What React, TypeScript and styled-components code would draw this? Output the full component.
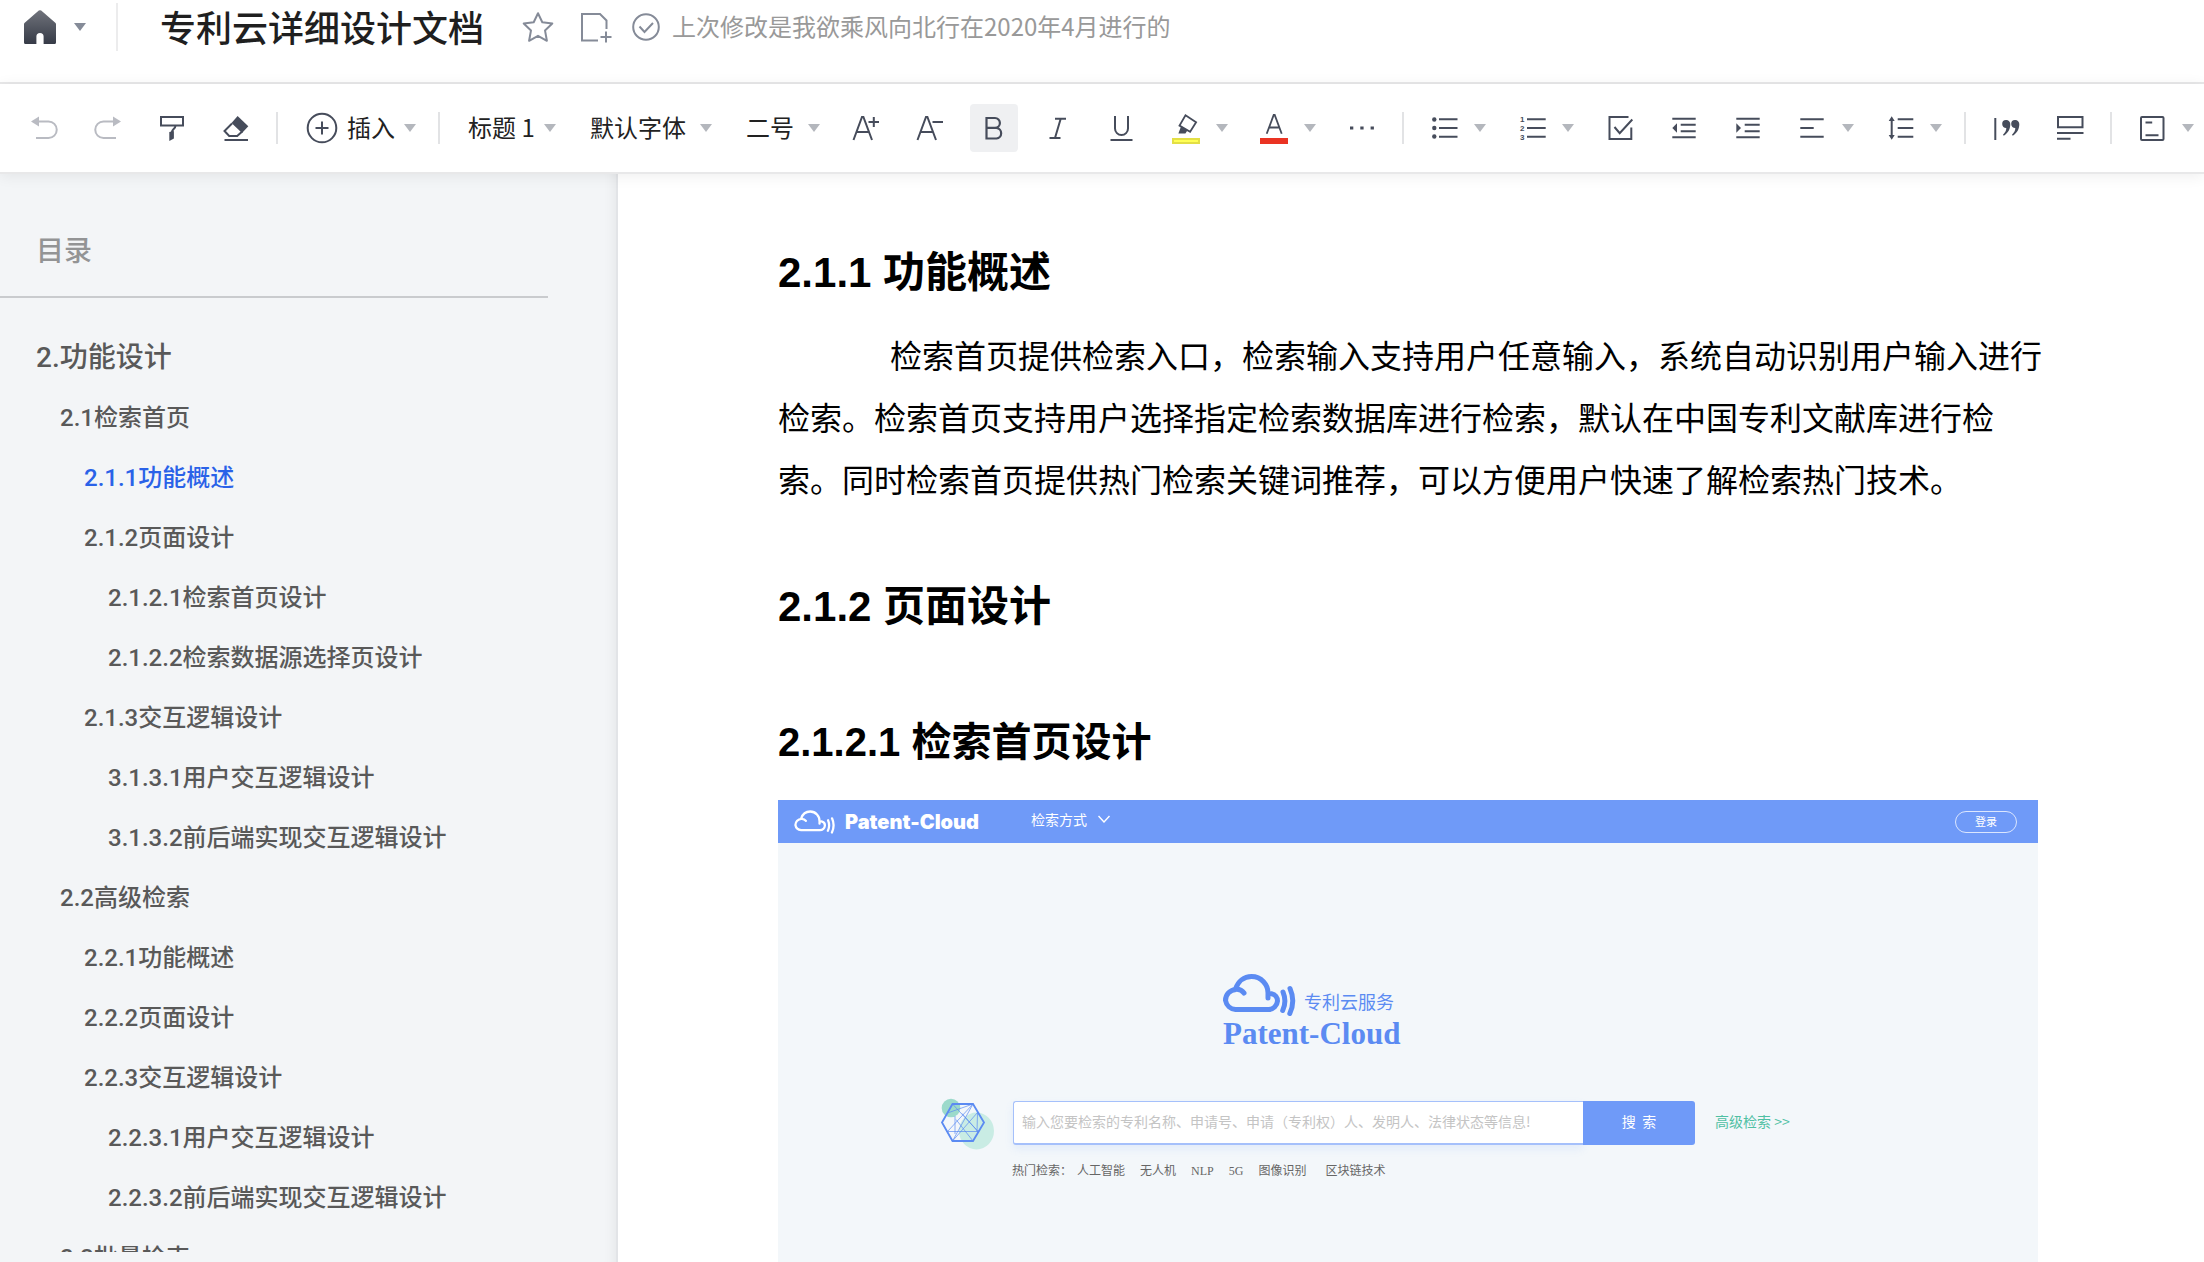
import React from "react";
import styled, { createGlobalStyle, css } from "styled-components";

const sans = '"Liberation Sans", "Noto Sans CJK SC", sans-serif';
const cjk = '"Noto Sans CJK SC", sans-serif';
const ink = "#464c5b";
const brand = "#5b8bf2";

const GlobalStyle = createGlobalStyle`
  *, *::before, *::after { box-sizing: border-box; }
  body { margin: 0; background: #fff; color: #222; font-family: ${sans}; }
  button, select, input { font: inherit; color: inherit; margin: 0; }
  h1, h2, h3, p, ul { margin: 0; padding: 0; }
  ul { list-style: none; }
  a { color: inherit; text-decoration: none; }
  svg { display: block; flex: none; }
`;

/* ---------- shell ---------- */

const Shell = styled.div`
  display: flex;
  flex-direction: column;
  height: 100vh;
  overflow: hidden;
`;

const Header = styled.header`
  display: flex;
  align-items: center;
  padding: 0 24px 28px;
  border-bottom: 2px solid #e8e8e9;
  font-family: ${cjk};
`;

const HeaderGroup = styled.div<{ $gap: number }>`
  display: flex;
  align-items: center;
  gap: ${(p) => p.$gap}px;
`;

const PlainButton = styled.button`
  display: flex;
  align-items: center;
  padding: 0;
  border: 0;
  background: none;
  cursor: pointer;
`;

const HomeButton = styled(PlainButton)`
  gap: 18px;
  margin-right: 30px;
`;

const HeaderRule = styled.span`
  width: 2px;
  height: 48px;
  background: #ececed;
`;

const DocTitle = styled.h1`
  margin: 0 38px 0 42px;
  padding-bottom: 2px;
  font-size: 36px;
  line-height: 52px;
  font-weight: 500;
  color: #1f1f1f;
  white-space: nowrap;
`;

const Label = styled.span`
  padding-bottom: 2px;
`;

const SavedNote = styled.div`
  display: flex;
  align-items: center;
  gap: 12px;
  font-size: 24px;
  line-height: 36px;
  color: #999;
  white-space: nowrap;
`;

/* ---------- toolbar ---------- */

const Toolbar = styled.div`
  position: relative;
  z-index: 2;
  display: flex;
  align-items: center;
  gap: 16px;
  flex: none;
  height: 90px;
  padding: 0 0 0 20px;
  border-bottom: 2px solid #e8e8e9;
  background: #fff;
  box-shadow: 0 2px 14px rgba(0, 0, 0, 0.07);
  font-family: ${cjk};
  font-size: 24px;
  line-height: 36px;
  color: #222;
`;

const ToolButton = styled.button<{ $active?: boolean; $menu?: boolean }>`
  display: flex;
  align-items: center;
  gap: 14px;
  flex: none;
  width: ${(p) => (p.$menu ? 72 : 48)}px;
  height: 48px;
  padding: 0 6px 0 8px;
  border: 0;
  border-radius: 4px;
  background: ${(p) => (p.$active ? "#eff0f2" : "none")};
  cursor: pointer;
`;

const InsertButton = styled(PlainButton)`
  flex: none;
  gap: 9px;
  height: 48px;
  padding: 0 6px 0 12px;
`;

const ToolRule = styled.span`
  flex: none;
  width: 2px;
  height: 32px;
  background: #e2e3e5;
`;

const SelectBox = styled.label<{ $width: number }>`
  display: grid;
  flex: none;
  align-items: center;
  width: ${(p) => p.$width}px;
  height: 48px;

  & > * {
    grid-area: 1 / 1;
  }
  & > svg {
    justify-self: end;
    margin-right: 6px;
    pointer-events: none;
  }
`;

const Select = styled.select`
  appearance: none;
  width: 100%;
  height: 48px;
  padding: 0 12px 2px;
  border: 0;
  background: none;
  cursor: pointer;
`;

/* ---------- outline ---------- */

const Body = styled.div`
  display: flex;
  flex: 1;
  min-height: 0;
`;

const Sidebar = styled.aside`
  flex: none;
  width: 618px;
  padding-bottom: 10px;
  border-right: 2px solid #e2e4e7;
  background: #f3f5f7;
  box-shadow: inset -14px 0 14px -14px rgba(0, 0, 0, 0.08);
`;

const SidebarClip = styled.div`
  height: 100%;
  overflow: hidden;
`;

const SidebarTitle = styled.h2`
  width: 548px;
  padding: 54px 36px 26px;
  border-bottom: 2px solid #c9cbce;
  font-family: ${cjk};
  font-size: 28px;
  line-height: 42px;
  font-weight: 500;
  color: #939495;
`;

const Outline = styled.ul`
  padding-top: 30px;
  font-family: Roboto, "Noto Sans CJK SC", sans-serif;
`;

const OutlineLink = styled.a<{ $level: number; $current?: boolean }>`
  display: block;
  padding-left: ${(p) => 36 + p.$level * 24}px;
  font-size: ${(p) => (p.$level === 0 ? 28 : 24)}px;
  line-height: 60px;
  font-weight: 500;
  color: ${(p) => (p.$current ? "#2a62e8" : "#595959")};
  white-space: nowrap;
`;

/* ---------- document ---------- */

const Page = styled.main`
  flex: 1;
  min-width: 0;
  overflow: hidden;
  padding: 67px 160px 0;
  color: #000;
`;

const heading = css`
  font-weight: 700;
  line-height: 64px;
`;

const Heading = styled.h2`
  ${heading}
  font-size: 42px;
`;

const SubHeading = styled.h3`
  ${heading}
  margin: 71px 0 26px;
  font-size: 40px;
`;

const Paragraph = styled.p`
  margin: 18px 0 66px;
  font-family: ${cjk};
  font-size: 32px;
  line-height: 62px;
  text-indent: 112px;
`;

/* ---------- embedded search page ---------- */

const Preview = styled.section`
  max-width: 1260px;
  height: 600px;
  background: #f3f7fa;
  font-family: ${cjk};
`;

const PreviewBar = styled.div`
  display: flex;
  align-items: center;
  height: 43px;
  padding: 0 21px 0 16px;
  background: #6f9af8;
  color: #fff;
`;

const PreviewBrand = styled.span`
  margin: 0 52px 0 9px;
  font-family: Inter, sans-serif;
  font-size: 20px;
  line-height: 24px;
  font-weight: 900;
`;

const ModeButton = styled(PlainButton)`
  gap: 11px;
  font-size: 14px;
  line-height: 20px;
  padding-bottom: 6px;
`;

const LoginButton = styled(PlainButton)`
  justify-content: center;
  width: 62px;
  height: 22px;
  margin-left: auto;
  padding-bottom: 2px;
  border: 1px solid #dbe6fe;
  border-radius: 11px;
  font-size: 11px;
  line-height: 16px;
`;

const Hero = styled.div`
  display: flex;
  flex-direction: column;
  padding: 131px 0 0 445px;
  color: ${brand};
`;

const HeroTop = styled.div`
  display: flex;
  align-items: center;
  gap: 7px;
  font-size: 18px;
  line-height: 26px;

  & > span {
    padding-top: 12px;
  }
`;

const HeroName = styled.strong`
  font-family: "Liberation Serif", serif;
  font-size: 31px;
  line-height: 36px;
`;

const SearchRow = styled.form`
  display: flex;
  align-items: center;
  padding: 43px 0 0 162px;
  font-size: 14px;
  line-height: 20px;
`;

const SearchInput = styled.input`
  width: 570px;
  height: 44px;
  margin-left: 19px;
  padding: 0 8px 4px;
  border: 1px solid #a5c0fb;
  border-bottom-width: 2px;
  border-right: 0;
  border-radius: 3px 0 0 3px;
  background: #fff;
  box-shadow: 0 4px 8px rgba(111, 154, 248, 0.12);

  &::placeholder {
    color: #c4c4c4;
    opacity: 1;
  }
`;

const SearchButton = styled.button`
  width: 112px;
  height: 44px;
  margin-right: 20px;
  padding: 0 0 4px;
  border: 0;
  border-radius: 0 3px 3px 0;
  background: #6f9af8;
  color: #fff;
  white-space: pre;
  cursor: pointer;
`;

const AdvancedLink = styled.a`
  padding-bottom: 4px;
  color: #4fc0a3;
`;

const HotRow = styled.div`
  display: flex;
  align-items: center;
  gap: 15px;
  padding: 10px 0 0 234px;
  font-family: "Liberation Serif", "Noto Sans CJK SC", serif;
  font-size: 12px;
  line-height: 20px;
  color: #666;

  & > a:last-child {
    margin-left: 4px;
  }
`;

const HotLabel = styled.span`
  margin-right: -10px;
`;

/* ---------- icons ---------- */

type IconProps = { children: React.ReactNode; size?: number; color?: string; width?: number };

const Icon = ({ children, size = 32, color = ink, width = 2 }: IconProps) => (
  <svg width={size} height={size} viewBox={`0 0 ${size} ${size}`} fill="none" stroke={color} strokeWidth={width} aria-hidden="true">
    {children}
  </svg>
);

const Caret = ({ color = "#b4b7bd" }: { color?: string }) => (
  <svg width="12" height="8" viewBox="0 0 12 8" aria-hidden="true">
    <path d="M0 0h12L6 8z" fill={color} />
  </svg>
);

const HomeIcon = () => (
  <svg width="32" height="34" viewBox="0 0 32 34" aria-hidden="true">
    <defs>
      <linearGradient id="home" x1="0" y1="0" x2="0" y2="1">
        <stop offset="0" stopColor="#70737b" />
        <stop offset="1" stopColor="#363b47" />
      </linearGradient>
    </defs>
    <path fill="url(#home)" d="M14.8 .6a2 2 0 0 1 2.4 0L31 12.4a2 2 0 0 1 1 1.8V32.500a1.500 1.500 0 0 1-1.500 1.500H19.600V26.500a3.600 3.600 0 0 0-7.200 0V34H1.500A1.500 1.500 0 0 1 0 32.500V14.200a2 2 0 0 1 1-1.800z" />
  </svg>
);

const StarIcon = () => (
  <Icon color="#858b98">
    <path strokeLinejoin="round" d="M16 2.200l4.300 9 10 1.300-7.300 6.900 1.900 10.400L16 24.800l-8.900 5 1.900-10.400-7.300-6.900 10-1.300z" />
  </Icon>
);

const AddPageIcon = () => (
  <Icon color="#858b98">
    <path d="M18 29.500H2V3h18l6.500 6.500V18M26 20.500v11M20.500 26h11" />
  </Icon>
);

const SavedIcon = () => (
  <Icon size={28} color="#858b98">
    <circle cx="14" cy="14" r="12.800" />
    <path d="M7.500 13.500l5 5.500 8.500-9" />
  </Icon>
);

const UndoIcon = () => (
  <Icon color="#b9bbc2">
    <path d="M10 9.500h10.500a8.250 8.250 0 0 1 0 16.500H8" />
    <path d="M3 9.500l8-5v10z" fill="#b9bbc2" stroke="none" />
  </Icon>
);

const RedoIcon = () => (
  <Icon color="#b9bbc2">
    <path d="M22 9.500H11.500a8.250 8.250 0 0 0 0 16.500H24" />
    <path d="M29 9.500l-8-5v10z" fill="#b9bbc2" stroke="none" />
  </Icon>
);

const RollerIcon = () => (
  <Icon>
    <path d="M5 5h22v8.500H5z" />
    <path d="M19.500 13.500c0 3.500-3.500 3.500-3.800 7" />
    <path d="M13.300 20l4.600-1v7.500l-4.600 2.500z" fill={ink} stroke="none" />
  </Icon>
);

const EraserIcon = () => (
  <Icon>
    <path d="M17.600 4L28.300 14.300 22 21 11.500 11z" fill={ink} stroke="none" />
    <path d="M12 11.500L4.500 19l4.700 5h8l5-4.500M4.500 28H28" />
  </Icon>
);

const InsertIcon = () => (
  <Icon>
    <circle cx="16" cy="16" r="14.300" />
    <path d="M9.500 16h13M16 9.500v13" />
  </Icon>
);

const GrowIcon = () => (
  <Icon>
    <path d="M3.500 28L12 5h1.400L22 28M6.500 20h12.500M18.500 10H29M23.800 5v10" />
  </Icon>
);

const ShrinkIcon = () => (
  <Icon>
    <path d="M3.500 28L12 5h1.400L22 28M6.500 20h12.500M18.500 10H29" />
  </Icon>
);

const BoldIcon = () => (
  <Icon width={2.2}>
    <path d="M8.500 6H17a4.900 4.900 0 0 1 0 9.800H8.500zM8.500 15.800H18.500a5.400 5.400 0 0 1 0 10.700H8.500z" />
  </Icon>
);

const ItalicIcon = () => (
  <Icon>
    <path d="M13 6.700h11M7.500 26h11M18.700 6.700L13 26" />
  </Icon>
);

const UnderlineIcon = () => (
  <Icon>
    <path d="M9 4v12.500a6.500 6.500 0 0 0 13 0V4M4.500 28h22" />
  </Icon>
);

const HighlightIcon = () => (
  <Icon width={1.8}>
    <path d="M15.500 3.200l10.600 7-6 9.600-10.600-6.200z" />
    <path d="M8.400 21.500l2.700-7.300 6.300 4.300-2 3z" fill={ink} stroke="none" />
    <path d="M3 27h26v4H3z" fill="#ffff55" stroke="#e3df45" strokeWidth="2" />
  </Icon>
);

const FontColorIcon = () => (
  <Icon width={1.8}>
    <path d="M8.700 21.800L15.700 3h1l7 18.800M11 15.500h10.500" />
    <path d="M2 26h28v6H2z" fill="#ea3323" stroke="none" />
  </Icon>
);

const MoreIcon = () => (
  <Icon>
    <path d="M4 16h3.300M14.300 16h3.300M24.600 16h3.300" strokeWidth="3" />
  </Icon>
);

const BulletIcon = () => (
  <Icon>
    <path d="M11 7.300h18.500M11 16h18.500M11 24.700h18.500" />
    <g fill={ink} stroke="none">
      <circle cx="6.300" cy="7.500" r="2.200" />
      <circle cx="6.300" cy="16" r="2.200" />
      <circle cx="6.300" cy="24.500" r="2.200" />
    </g>
  </Icon>
);

const NumberIcon = () => (
  <Icon>
    <path d="M11 7.300h18.700M11 16h18.700M11 24.700h18.700" />
    <g fill={ink} stroke="none" fontFamily="Liberation Sans" fontWeight="700" fontSize="8">
      <text x="4" y="10">1</text>
      <text x="4" y="19">2</text>
      <text x="4" y="28">3</text>
    </g>
  </Icon>
);

const TaskIcon = () => (
  <Icon>
    <path d="M24.500 5H5.500v22h21.800V15.500M10.500 15l5.200 6.200L28.300 7.500" />
  </Icon>
);

const OutdentIcon = () => (
  <Icon>
    <path d="M4.300 6.700h23.400M12.700 12.800h15M12.700 19.200h15M4.300 25.300h23.400" />
    <path d="M4.300 16L9 11.300v9.400z" fill={ink} stroke="none" />
  </Icon>
);

const IndentIcon = () => (
  <Icon>
    <path d="M4.300 6.700h23.400M12.700 12.800h15M12.700 19.200h15M4.300 25.300h23.400" />
    <path d="M9 16l-4.700-4.700v9.400z" fill={ink} stroke="none" />
  </Icon>
);

const AlignIcon = () => (
  <Icon>
    <path d="M4.300 7.200h23.400M4.300 16h13.400M4.300 24.800h23.400" />
  </Icon>
);

const LineHeightIcon = () => (
  <Icon>
    <path d="M7.700 7v18M13.700 7.300h15.600M13.700 16h15.600M13.700 24.700h15.600" />
    <path d="M7.700 4.300l3 4.700h-6zM7.700 27.700l3-4.700h-6z" fill={ink} stroke="none" />
  </Icon>
);

const QuoteIcon = () => (
  <Icon>
    <path d="M5.300 6v22" />
    <g fill={ink} stroke="none">
      <path d="M16 8a4 4 0 0 1 4.300 4.300c0 5-2.500 9-6.500 11.400l-.8-1c2.300-2.200 3.300-4.400 3.300-6.700A3.900 3.900 0 0 1 12.200 12 3.900 3.900 0 0 1 16 8z" />
      <path d="M25 8a4 4 0 0 1 4.300 4.300c0 5-2.500 9-6.500 11.400l-.8-1c2.300-2.200 3.300-4.400 3.300-6.700a3.900 3.900 0 0 1-4.100-4A3.900 3.900 0 0 1 25 8z" />
    </g>
  </Icon>
);

const DividerIcon = () => (
  <Icon>
    <path d="M4 5h24.500v10.200H4zM3 21h26.500M3 26.800h13.500" />
  </Icon>
);

const CardIcon = () => (
  <Icon>
    <rect x="5" y="5" width="22.500" height="23" rx="1" />
    <path d="M9.500 10.500h6.700M9.500 23.300h13" />
  </Icon>
);

const CloudIcon = ({ width, height, stroke }: { width: number; height: number; stroke: number }) => (
  <svg width={width} height={height} viewBox="0 0 74 42" fill="none" stroke="currentColor" strokeWidth={stroke} strokeLinecap="round" aria-hidden="true">
    <path d="M21 19c-2-2.800-5-3.800-8-3.600A11 11 0 0 0 2.500 26.400 11 11 0 0 0 12.500 35.500H45.500A9.200 9.200 0 0 0 54.500 27c0-3.600-2.200-6.500-6-7.200M12.500 15C15 7.500 21 2.500 28.500 2.500c9.500 0 17 8 16.500 17.500v4" />
    <path d="M60 18c2.500 6 2.500 12.500-.3 18.500M67 14.500c3.800 8.500 3.800 16.500-.2 25" />
  </svg>
);

const ChevronIcon = () => (
  <svg width="12" height="8" viewBox="0 0 12 8" fill="none" stroke="currentColor" strokeWidth="1.400" aria-hidden="true">
    <path d="M.5 1L6 7l5.500-6" />
  </svg>
);

const NetworkIcon = () => (
  <svg width="54" height="56" viewBox="0 -2 54 56" fill="none" aria-hidden="true">
    <ellipse cx="36.500" cy="34" rx="17.500" ry="18.500" fill="#c9ece4" />
    <circle cx="11" cy="11" r="9.300" fill="#9cdacb" />
    <path d="M2 25.500L12.500 7H33l11 18.500L33 44H12.500z" stroke={brand} strokeWidth="1.800" />
    <path d="M12.500 7L38 34.500M33 7L7.500 34.500M12.500 44L33 7M33 44L16 22.500M15 19v18M7.500 16L33 7M2 25.500L12.500 44l25-28.500-.5 19.500M7.500 34.500H38M22 16.500L38 34.500" stroke={brand} strokeWidth="1" opacity=".7" />
  </svg>
);

/* ---------- content ---------- */

const outline: { level: number; text: string; current?: boolean }[] = [
  { level: 0, text: "2.功能设计" },
  { level: 1, text: "2.1检索首页" },
  { level: 2, text: "2.1.1功能概述", current: true },
  { level: 2, text: "2.1.2页面设计" },
  { level: 3, text: "2.1.2.1检索首页设计" },
  { level: 3, text: "2.1.2.2检索数据源选择页设计" },
  { level: 2, text: "2.1.3交互逻辑设计" },
  { level: 3, text: "3.1.3.1用户交互逻辑设计" },
  { level: 3, text: "3.1.3.2前后端实现交互逻辑设计" },
  { level: 1, text: "2.2高级检索" },
  { level: 2, text: "2.2.1功能概述" },
  { level: 2, text: "2.2.2页面设计" },
  { level: 2, text: "2.2.3交互逻辑设计" },
  { level: 3, text: "2.2.3.1用户交互逻辑设计" },
  { level: 3, text: "2.2.3.2前后端实现交互逻辑设计" },
  { level: 1, text: "2.3批量检索" },
];

const hotWords = ["人工智能", "无人机", "NLP", "5G", "图像识别", "区块链技术"];

type ToolProps = { label: string; children: React.ReactNode; menu?: boolean; active?: boolean };

const Tool = ({ label, children, menu, active }: ToolProps) => (
  <ToolButton type="button" aria-label={label} aria-pressed={active} $menu={menu} $active={active}>
    {children}
    {menu && <Caret />}
  </ToolButton>
);

const ToolSelect = ({ label, value, width }: { label: string; value: string; width: number }) => (
  <SelectBox $width={width}>
    <Select aria-label={label} defaultValue={value}>
      <option>{value}</option>
    </Select>
    <Caret />
  </SelectBox>
);

export default function App() {
  return (
    <Shell>
      <GlobalStyle />
      <Header>
        <HomeButton type="button" aria-label="首页">
          <HomeIcon />
          <Caret color="#858b98" />
        </HomeButton>
        <HeaderRule />
        <DocTitle>专利云详细设计文档</DocTitle>
        <HeaderGroup $gap={20}>
          <HeaderGroup $gap={26}>
            <PlainButton type="button" aria-label="收藏"><StarIcon /></PlainButton>
            <PlainButton type="button" aria-label="新建"><AddPageIcon /></PlainButton>
          </HeaderGroup>
          <SavedNote>
            <SavedIcon />
            <Label>上次修改是我欲乘风向北行在2020年4月进行的</Label>
          </SavedNote>
        </HeaderGroup>
      </Header>

      <Toolbar role="toolbar">
        <Tool label="撤销"><UndoIcon /></Tool>
        <Tool label="重做"><RedoIcon /></Tool>
        <Tool label="格式刷"><RollerIcon /></Tool>
        <Tool label="清除格式"><EraserIcon /></Tool>
        <ToolRule />
        <InsertButton type="button">
          <InsertIcon />
          <Label>插入</Label>
          <Caret />
        </InsertButton>
        <ToolRule />
        <ToolSelect label="样式" value="标题 1" width={106} />
        <ToolSelect label="字体" value="默认字体" width={140} />
        <ToolSelect label="字号" value="二号" width={92} />
        <Tool label="增大字号"><GrowIcon /></Tool>
        <Tool label="减小字号"><ShrinkIcon /></Tool>
        <Tool label="加粗" active><BoldIcon /></Tool>
        <Tool label="斜体"><ItalicIcon /></Tool>
        <Tool label="下划线"><UnderlineIcon /></Tool>
        <Tool label="高亮颜色" menu><HighlightIcon /></Tool>
        <Tool label="字体颜色" menu><FontColorIcon /></Tool>
        <Tool label="更多"><MoreIcon /></Tool>
        <ToolRule />
        <Tool label="无序列表" menu><BulletIcon /></Tool>
        <Tool label="有序列表" menu><NumberIcon /></Tool>
        <Tool label="任务列表"><TaskIcon /></Tool>
        <Tool label="减少缩进"><OutdentIcon /></Tool>
        <Tool label="增加缩进"><IndentIcon /></Tool>
        <Tool label="对齐" menu><AlignIcon /></Tool>
        <Tool label="行高" menu><LineHeightIcon /></Tool>
        <ToolRule />
        <Tool label="引用"><QuoteIcon /></Tool>
        <Tool label="分割线"><DividerIcon /></Tool>
        <ToolRule />
        <Tool label="页面" menu><CardIcon /></Tool>
      </Toolbar>

      <Body>
        <Sidebar>
          <SidebarClip>
            <SidebarTitle>目录</SidebarTitle>
            <nav>
              <Outline>
                {outline.map((item) => (
                  <li key={item.text}>
                    <OutlineLink href="#" $level={item.level} $current={item.current}>
                      {item.text}
                    </OutlineLink>
                  </li>
                ))}
              </Outline>
            </nav>
          </SidebarClip>
        </Sidebar>

        <Page>
          <Heading>2.1.1 功能概述</Heading>
          <Paragraph>
            检索首页提供检索入口，检索输入支持用户任意输入，系统自动识别用户输入进行检索。检索首页支持用户选择指定检索数据库进行检索，默认在中国专利文献库进行检索。同时检索首页提供热门检索关键词推荐，可以方便用户快速了解检索热门技术。
          </Paragraph>
          <Heading>2.1.2 页面设计</Heading>
          <SubHeading>2.1.2.1 检索首页设计</SubHeading>

          <Preview>
            <PreviewBar>
              <CloudIcon width={42} height={24} stroke={4} />
              <PreviewBrand>Patent-Cloud</PreviewBrand>
              <ModeButton type="button">
                检索方式
                <ChevronIcon />
              </ModeButton>
              <LoginButton type="button">登录</LoginButton>
            </PreviewBar>
            <Hero>
              <HeroTop>
                <CloudIcon width={74} height={42} stroke={5} />
                <span>专利云服务</span>
              </HeroTop>
              <HeroName>Patent-Cloud</HeroName>
            </Hero>
            <SearchRow onSubmit={(e) => e.preventDefault()}>
              <NetworkIcon />
              <SearchInput type="text" aria-label="检索" placeholder="输入您要检索的专利名称、申请号、申请（专利权）人、发明人、法律状态等信息!" />
              <SearchButton type="submit">搜  索</SearchButton>
              <AdvancedLink href="#">高级检索 &gt;&gt;</AdvancedLink>
            </SearchRow>
            <HotRow>
              <HotLabel>热门检索：</HotLabel>
              {hotWords.map((word) => (
                <a key={word} href="#">{word}</a>
              ))}
            </HotRow>
          </Preview>
        </Page>
      </Body>
    </Shell>
  );
}
